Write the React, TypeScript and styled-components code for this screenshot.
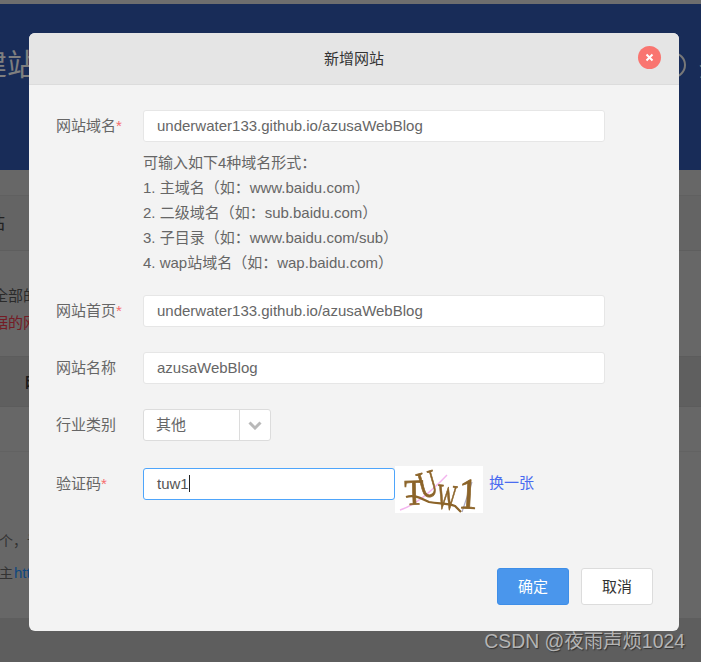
import React from "react";
import styled, { createGlobalStyle } from "styled-components";

const GlobalStyle = createGlobalStyle`
  html, body {
    margin: 0;
    padding: 0;
    height: 662px;
    overflow: hidden;
    background: #cecece;
    font-family: "Liberation Sans", "Noto Sans CJK SC", sans-serif;
  }
`;

const Page = styled.div`
  position: relative;
  width: 701px;
  height: 662px;
  overflow: hidden;
`;

const TopStrip = styled.div`
  height: 4px;
  background: #dcdcdc;
`;

const Banner = styled.div`
  height: 166px;
  background: #3159b0;
  color: #fff;
  display: flex;
  justify-content: space-between;
  padding-top: 43px;
  box-sizing: border-box;
`;

const BannerTitle = styled.div`
  font-size: 30px;
  line-height: 36px;
  margin-left: -23px;
  white-space: nowrap;
`;

const BannerHelp = styled.div`
  display: flex;
  gap: 13px;
  align-items: center;
  height: 36px;
  margin-right: -46px;
  font-size: 24px;
  white-space: nowrap;
`;

const HelpCircle = styled.span`
  display: block;
  width: 22px;
  height: 22px;
  border: 2px solid #f0f0f0;
  border-radius: 50%;
`;

const Spacer = styled.div<{ $h: number }>`
  height: ${(p) => p.$h}px;
`;

const SectionHead = styled.div`
  height: 56px;
  box-sizing: border-box;
  border-top: 1px solid #c0c0c0;
  border-bottom: 1px solid #bdbdbd;
  background: #c8c8c8;
  font-size: 18px;
  line-height: 54px;
  color: #444;
  text-indent: -13px;
`;

const Notice = styled.div<{ $red?: boolean }>`
  font-size: 15px;
  line-height: 27px;
  margin-left: -7px;
  white-space: nowrap;
  color: ${(p) => (p.$red ? "#e8384a" : "#555")};
`;

const TableHead = styled.div`
  height: 51px;
  box-sizing: border-box;
  background: #bebebe;
  border-top: 1px solid #b8b8b8;
  border-bottom: 1px solid #b8b8b8;
  padding-left: 25px;
  font-size: 14px;
  font-weight: 700;
  line-height: 50px;
  color: #333;
`;

const TableRow = styled.div`
  height: 45px;
  box-sizing: border-box;
  border-bottom: 1px solid #c4c4c4;
`;

const Hint = styled.div`
  font-size: 14px;
  line-height: 32px;
  color: #666;
  margin-left: -1px;
  white-space: nowrap;
  a {
    color: #1e90ff;
    font-size: 15px;
    margin-left: 1px;
  }
`;

const PageFooter = styled.div`
  position: absolute;
  left: 0;
  right: 0;
  top: 618px;
  bottom: 0;
  background: #bcbcbc;
`;

const Mask = styled.div`
  position: absolute;
  inset: 0;
  background: rgba(0, 0, 0, 0.5);
`;

const Modal = styled.div`
  position: absolute;
  left: 29px;
  top: 33px;
  width: 650px;
  height: 598px;
  display: flex;
  flex-direction: column;
  box-sizing: border-box;
  background: #f3f3f3;
  border-radius: 6px;
  overflow: hidden;
`;

const ModalHeader = styled.div`
  height: 52px;
  flex: none;
  position: relative;
  box-sizing: border-box;
  background: #e5e5e5;
  border-bottom: 1px solid #dcdcdc;
  text-align: center;
  font-size: 15px;
  line-height: 51px;
  color: #333;
`;

const CloseButton = styled.button`
  position: absolute;
  right: 18px;
  top: 13px;
  width: 23px;
  height: 23px;
  padding: 0;
  border: none;
  border-radius: 50%;
  background: #f97570;
  display: flex;
  align-items: center;
  justify-content: center;
`;

const ModalBody = styled.div`
  flex: 1;
  padding: 25px 26px 26px 27px;
  display: flex;
  flex-direction: column;
`;

const Row = styled.div<{ $gap?: number }>`
  display: flex;
  align-items: flex-start;
  margin-bottom: ${(p) => p.$gap ?? 25}px;
`;

const Label = styled.label<{ $offset?: number }>`
  width: 87px;
  flex: none;
  font-size: 15px;
  line-height: 32px;
  color: #666;
  margin-top: ${(p) => p.$offset ?? 0}px;
  i {
    font-style: normal;
    color: #f56c6c;
  }
`;

const Column = styled.div`
  display: flex;
  flex-direction: column;
`;

const Input = styled.input`
  display: block;
  width: 462px;
  height: 32px;
  box-sizing: border-box;
  padding: 0 13px 2px;
  background: #fff;
  border: 1px solid #e6e6e6;
  border-radius: 3px;
  outline: none;
  font: 15px "Liberation Sans", "Noto Sans CJK SC", sans-serif;
  color: #666;
`;

const Tips = styled.div`
  margin-top: 8px;
  height: 125px;
  font-size: 15px;
  line-height: 25px;
  color: #666;
`;

const Select = styled.div`
  display: flex;
  width: 128px;
  height: 32px;
  box-sizing: border-box;
  background: #fff;
  border: 1px solid #dcdcdc;
  border-radius: 3px;
`;

const SelectValue = styled.span`
  flex: 1;
  padding-left: 12px;
  font-size: 15px;
  line-height: 30px;
  color: #666;
`;

const SelectArrow = styled.span`
  width: 30px;
  border-left: 1px solid #dcdcdc;
  display: flex;
  align-items: center;
  justify-content: center;
`;

const FocusField = styled.div`
  width: 252px;
  height: 32px;
  margin-top: 2px;
  box-sizing: border-box;
  padding: 0 0 2px 13px;
  background: #fff;
  border: 1px solid #4ea5fb;
  border-radius: 3px;
  display: flex;
  align-items: center;
  font-size: 15px;
  color: #555;
`;

const Caret = styled.span`
  width: 1px;
  height: 17px;
  background: #222;
`;

const RefreshLink = styled.a`
  margin: 2px 0 0 6px;
  font-size: 15px;
  line-height: 30px;
  color: #4a6cf0;
  text-decoration: none;
`;

const ModalFooter = styled.div`
  margin-top: auto;
  display: flex;
  justify-content: flex-end;
  gap: 12px;
`;

const Button = styled.button<{ $primary?: boolean }>`
  width: 72px;
  height: 37px;
  padding: 0 0 2px;
  box-sizing: border-box;
  border: 1px solid ${(p) => (p.$primary ? "#3e8ee8" : "#dcdcdc")};
  border-radius: 3px;
  background: ${(p) => (p.$primary ? "#4a96ec" : "#fff")};
  color: ${(p) => (p.$primary ? "#fff" : "#333")};
  font: 15px "Liberation Sans", "Noto Sans CJK SC", sans-serif;
`;

const Watermark = styled.div`
  position: absolute;
  right: 16px;
  top: 629px;
  font-size: 19.4px;
  line-height: 24px;
  color: #b4b4b4;
  text-shadow: 1px 1px 1px #333;
  white-space: nowrap;
`;

const Captcha = () => (
  <svg width="88" height="47" viewBox="0 0 88 47" style={{ display: "block", flex: "none" }}>
    <rect width="88" height="47" fill="#fff" />
    <path d="M5 44 C18 40 34 28 52 9" fill="none" stroke="#f3b4ee" strokeWidth="1.4" />
    <path d="M67 46 L77 16" fill="none" stroke="#a9a9c4" strokeWidth="1.2" />
    <g
      fill="#8c6429"
      stroke="#8c6429"
      strokeWidth="0.7"
      fontFamily="'Liberation Serif', serif"
      style={{ filter: "blur(0.35px)" }}
    >
      <text transform="translate(10 39) rotate(-2) scale(0.95 1.1)" fontSize="33">T</text>
      <text transform="translate(27 33) rotate(-16) scale(0.8 1.2)" fontSize="32">U</text>
      <text transform="translate(41 42) rotate(6) scale(0.68 1.2)" fontSize="30">W</text>
      <text transform="translate(63 42) rotate(3) scale(1 1.15)" fontSize="38">1</text>
    </g>
    <path
      d="M11 31 C20 28 27 33 34 36 C44 38 52 37 60 40 L66 46"
      fill="none"
      stroke="#8c6429"
      strokeWidth="2.2"
    />
  </svg>
);

const App: React.FC = () => {
  return (
    <Page>
      <GlobalStyle />
      <TopStrip />
      <Banner>
        <BannerTitle>建站</BannerTitle>
        <BannerHelp>
          <HelpCircle />
          <span>登录</span>
        </BannerHelp>
      </Banner>
      <Spacer $h={25} />
      <SectionHead>站</SectionHead>
      <Spacer $h={31} />
      <Notice>全部的</Notice>
      <Notice $red>据的网</Notice>
      <Spacer $h={20} />
      <TableHead>网</TableHead>
      <TableRow />
      <Spacer $h={73} />
      <Hint>个，该</Hint>
      <Hint>
        主<a>http</a>
      </Hint>
      <PageFooter />
      <Mask />

      <Modal>
        <ModalHeader>
          新增网站
          <CloseButton aria-label="关闭">
            <svg width="9" height="9" viewBox="0 0 9 9">
              <path d="M1.5 1.5 L7.5 7.5 M7.5 1.5 L1.5 7.5" stroke="#fff" strokeWidth="2" />
            </svg>
          </CloseButton>
        </ModalHeader>
        <ModalBody>
          <Row $gap={20}>
            <Label>
              网站域名<i>*</i>
            </Label>
            <Column>
              <Input readOnly value="underwater133.github.io/azusaWebBlog" />
              <Tips>
                可输入如下4种域名形式：
                <br />
                1. 主域名（如：www.baidu.com）
                <br />
                2. 二级域名（如：sub.baidu.com）
                <br />
                3. 子目录（如：www.baidu.com/sub）
                <br />
                4. wap站域名（如：wap.baidu.com）
              </Tips>
            </Column>
          </Row>
          <Row>
            <Label>
              网站首页<i>*</i>
            </Label>
            <Input readOnly value="underwater133.github.io/azusaWebBlog" />
          </Row>
          <Row>
            <Label>网站名称</Label>
            <Input readOnly value="azusaWebBlog" />
          </Row>
          <Row>
            <Label>行业类别</Label>
            <Select>
              <SelectValue>其他</SelectValue>
              <SelectArrow>
                <svg width="14" height="9" viewBox="0 0 14 9">
                  <path d="M1.5 1.5 L7 7 L12.5 1.5" fill="none" stroke="#b9b9b9" strokeWidth="3" />
                </svg>
              </SelectArrow>
            </Select>
          </Row>
          <Row>
            <Label $offset={2}>
              验证码<i>*</i>
            </Label>
            <FocusField>
              tuw1
              <Caret />
            </FocusField>
            <Captcha />
            <RefreshLink>换一张</RefreshLink>
          </Row>
          <ModalFooter>
            <Button $primary>确定</Button>
            <Button>取消</Button>
          </ModalFooter>
        </ModalBody>
      </Modal>

      <Watermark>CSDN @夜雨声烦1024</Watermark>
    </Page>
  );
};

export default App;
